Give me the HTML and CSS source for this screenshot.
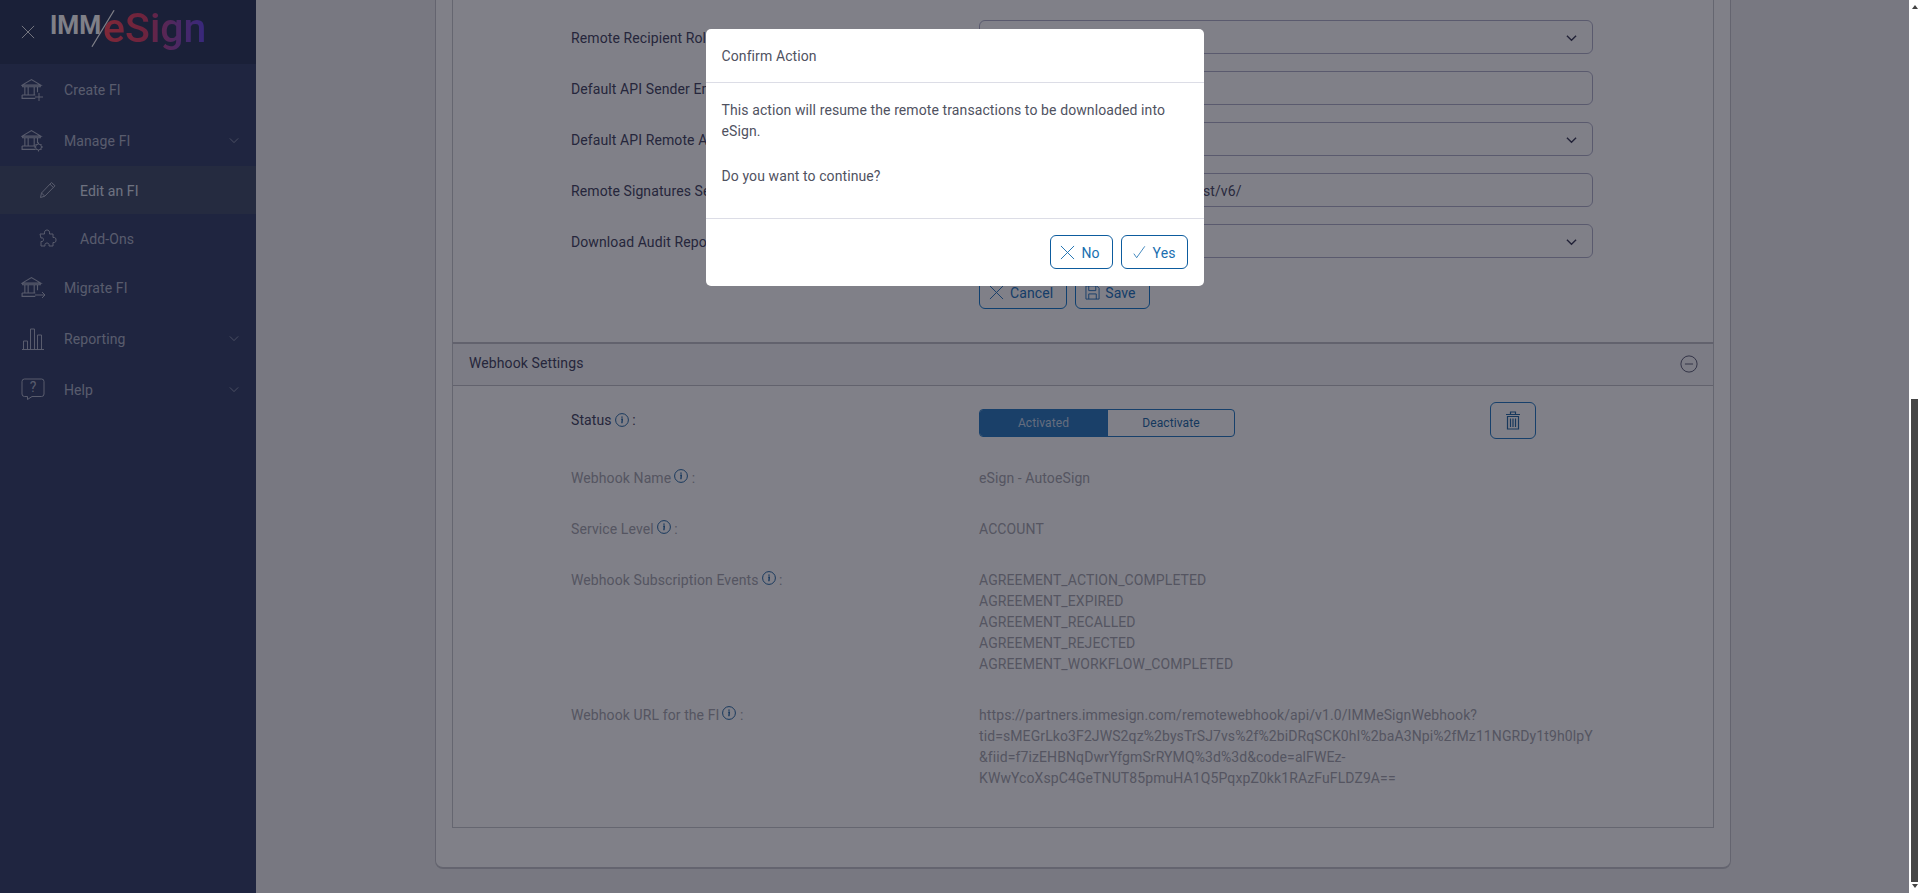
FILE: index.html
```html
<!DOCTYPE html>
<html lang="en">
<head>
<meta charset="utf-8">
<title>IMM eSign</title>
<link rel="stylesheet" href="styles.css">
</head>
<body>
<svg class="defs" width="0" height="0">
  <symbol id="bank" viewBox="0 0 20 20">
    <path d="M1 6.500 9.500 1.500 18 6.500Z M1.500 6.500V8H17.500V6.500 M3.500 8V15 M6.500 8V15 M12 8V15 M15 8V13 M1 15.500H13 M1 15.500V18.500H13"/>
  </symbol>
  <symbol id="chev" viewBox="0 0 12 8"><path d="M1 1.500 6 6.500 11 1.500"/></symbol>
  <symbol id="x" viewBox="0 0 16 16"><path d="M1 1 15 15M15 1 1 15"/></symbol>
  <symbol id="info" viewBox="0 0 14 14"><circle cx="7" cy="7" r="6.400"/><path class="i" d="M7 3.600V4.800M6.200 6.300H7.300L6.900 10.200"/></symbol>
</svg>
<div class="app">
  <div class="shell">
    <aside class="sidebar">
      <header class="brand">
        <svg class="icon close"><use href="#x"/></svg>
        <div class="logo">
          <span class="imm">IMM</span><span class="esign">eSign</span>
          <svg class="slash" viewBox="0 0 26 40"><path d="M1 39 24 1"/></svg>
        </div>
      </header>
      <nav class="nav">
        <a class="item"><svg class="icon nav-ic" viewBox="0 0 24 24"><use href="#bank" width="22" height="22"/><path d="M14 19H22M18 15V23"/></svg><span>Create FI</span></a>
        <a class="item"><svg class="icon nav-ic" viewBox="0 0 24 24"><use href="#bank" width="22" height="22"/><circle cx="17.500" cy="18" r="3"/><path d="M17.500 13.500V15M17.500 21V22.500M13 18H14.500M20.500 18H22M14.500 15 15.500 16M19.500 20 20.500 21M20.500 15 19.500 16M15.500 20 14.500 21"/></svg><span>Manage FI</span><svg class="icon chev"><use href="#chev"/></svg></a>
        <a class="sub current"><svg class="icon sub-ic" viewBox="0 0 18 18"><path d="M1.500 16.500 2.500 12 12.500 1.500 16 4.800 5.800 15.200ZM2.500 12 5.800 15.200M11 3.200 14.400 6.500"/></svg><span>Edit an FI</span></a>
        <a class="sub"><svg class="icon sub-ic" viewBox="0 0 18 18"><path d="M1 5H5.500C5 2 6.500 1 8 1S11 2 10.500 5H14V8.500C16.500 8 17 9.500 17 11S16.500 14 14 13.500V17H10C10.500 15 9.500 14 8 14S5.500 15 6 17H2V12.500C4 13 4.500 11.500 4.500 10.500S4 8.500 2 9Z"/></svg><span>Add-Ons</span></a>
        <a class="item"><svg class="icon nav-ic" viewBox="0 0 24 24"><use href="#bank" width="22" height="22"/><path d="M14 19H24M21 16 24 19 21 22"/></svg><span>Migrate FI</span></a>
        <a class="item"><svg class="icon nav-ic" viewBox="0 0 24 24"><path d="M1 22.500H23M2.500 22V14H6.500V22M9.500 22V2H13.500V22M16.500 22V8H20.500V22"/></svg><span>Reporting</span><svg class="icon chev"><use href="#chev"/></svg></a>
        <a class="item"><svg class="icon nav-ic" viewBox="0 0 24 24"><path d="M3.500 1H20.500Q23 1 23 3.500V16Q23 18.500 20.500 18.500H11L6.500 21.500V18.500H3.500Q1 18.500 1 16V3.500Q1 1 3.500 1Z"/><text class="q" x="12" y="14" text-anchor="middle">?</text></svg><span>Help</span><svg class="icon chev"><use href="#chev"/></svg></a>
      </nav>
    </aside>
    <main class="main">
      <section class="card">
        <div class="panel form-panel">
          <div class="form-row"><label class="label dark">Remote Recipient Role :</label><div class="control select"><svg class="icon select-chev"><use href="#chev"/></svg></div></div>
          <div class="form-row"><label class="label dark">Default API Sender Email :</label><div class="control"></div></div>
          <div class="form-row"><label class="label dark">Default API Remote Account :</label><div class="control select"><svg class="icon select-chev"><use href="#chev"/></svg></div></div>
          <div class="form-row"><label class="label dark">Remote Signatures Service URL :</label><div class="control">https://api.adobesign.com/api/rest/v6/</div></div>
          <div class="form-row"><label class="label dark">Download Audit Report :</label><div class="control select"><svg class="icon select-chev"><use href="#chev"/></svg></div></div>
          <div class="form-actions">
            <button class="btn under"><svg class="icon bx"><use href="#x"/></svg>Cancel</button>
            <button class="btn under"><svg class="icon bs" viewBox="0 0 16 16"><path d="M1 1H12.500L15 3.500V15H1ZM4 1V6H11.500V1M4 15V9.500H12V15"/></svg>Save</button>
          </div>
        </div>
        <div class="panel hook-panel">
          <div class="panel-head">
            <h2 class="panel-title">Webhook Settings</h2>
            <svg class="icon collapse" viewBox="0 0 20 20"><circle cx="10" cy="10" r="9"/><path d="M5.500 10H14.500"/></svg>
          </div>
          <div class="hook-body">
            <div class="hook-row status-row">
              <div class="label dark">Status<svg class="icon info"><use href="#info"/></svg> :</div>
              <div class="status-cell">
                <div class="toggle"><span class="on">Activated</span><span class="off">Deactivate</span></div>
                <button class="trash"><svg class="icon tr" viewBox="0 0 16 20"><path d="M1 4H15M5.500 4V1.500H10.500V4M2.500 6V18.500H13.500V6Z M5.500 8V16.500M8 8V16.500M10.500 8V16.500"/></svg></button>
              </div>
            </div>
            <div class="hook-row"><div class="label">Webhook Name<svg class="icon info"><use href="#info"/></svg> :</div><div class="value">eSign - AutoeSign</div></div>
            <div class="hook-row"><div class="label">Service Level<svg class="icon info"><use href="#info"/></svg> :</div><div class="value">ACCOUNT</div></div>
            <div class="hook-row"><div class="label">Webhook Subscription Events<svg class="icon info"><use href="#info"/></svg> :</div><div class="value">AGREEMENT_ACTION_COMPLETED<br>AGREEMENT_EXPIRED<br>AGREEMENT_RECALLED<br>AGREEMENT_REJECTED<br>AGREEMENT_WORKFLOW_COMPLETED</div></div>
            <div class="hook-row"><div class="label">Webhook URL for the FI<svg class="icon info"><use href="#info"/></svg> :</div><div class="value">https://partners.immesign.com/remotewebhook/api/v1.0/IMMeSignWebhook?<br>tid=sMEGrLko3F2JWS2qz%2bysTrSJ7vs%2f%2biDRqSCK0hI%2baA3Npi%2fMz11NGRDy1t9h0lpY<br>&amp;fiid=f7izEHBNqDwrYfgmSrRYMQ%3d%3d&amp;code=alFWEz-<br>KWwYcoXspC4GeTNUT85pmuHA1Q5PqxpZ0kk1RAzFuFLDZ9A==</div></div>
          </div>
        </div>
      </section>
    </main>
    <div class="backdrop">
      <div class="modal" role="dialog">
        <div class="modal-head">Confirm Action</div>
        <div class="modal-body">
          <p>This action will resume the remote transactions to be downloaded into eSign.</p>
          <p>Do you want to continue?</p>
        </div>
        <div class="modal-foot">
          <button class="btn"><svg class="icon bx"><use href="#x"/></svg>No</button>
          <button class="btn yes"><svg class="icon bc" viewBox="0 0 16 16"><path d="M1 10 4.500 15 14.500 1"/></svg>Yes</button>
        </div>
      </div>
    </div>
  </div>
  <div class="scrollbar">
    <span class="arrow up"></span>
    <span class="thumb"></span>
    <span class="arrow down"></span>
  </div>
</div>
</body>
</html>
```
FILE: styles.css
```css
* { box-sizing: border-box; }
html, body { margin: 0; height: 100%; overflow: hidden; }
body { font: 14px/21px Roboto, "Liberation Sans", sans-serif; letter-spacing: .1px; color: #a8a9b0; background: #fff; }
.defs { position: absolute; }
.icon { fill: none; stroke: currentColor; stroke-width: 1; display: block; flex: none; }

.app { display: flex; height: 893px; }
.shell { position: relative; flex: 1; display: flex; min-width: 0; background: #eeeff0; }

.sidebar { width: 256px; flex: none; background: #3c496f; color: #b0b6c8; }
.brand { height: 64px; display: flex; align-items: center; background: #323f5f; }
.close { width: 14px; height: 14px; margin-left: 21px; color: #fff; }
.logo { position: relative; margin-left: 15px; height: 64px; width: 165px; display: flex; align-items: flex-start; }
.imm { font: 700 25px/25px Roboto, sans-serif; letter-spacing: 0; color: #fff; margin-top: 13px; }
.esign { font: 500 41px/48px Roboto, sans-serif; letter-spacing: 0; margin: 4px 0 0 2px; background: linear-gradient(90deg, #ff4f5d 0%, #d8456a 40%, #9a4fb0 70%, #6c4fe9 100%); -webkit-background-clip: text; background-clip: text; color: transparent; }
.slash { position: absolute; left: 41px; top: 9px; width: 25px; height: 39px; stroke: #fff; stroke-width: 1.3; fill: none; }

.nav { display: flex; flex-direction: column; }
.item { height: 51px; display: flex; align-items: center; padding: 0 17px 0 21px; }
.item span { margin-left: 19px; flex: 1; padding-top: 2px; }
.nav-ic { width: 24px; height: 24px; overflow: visible; }
.q { font: 400 14px Roboto, sans-serif; fill: currentColor; stroke: none; }
.chev { width: 10px; height: 7px; stroke-width: .9; }
.sub { height: 48px; display: flex; align-items: center; padding-left: 39px; }
.sub span { margin-left: 23px; padding-top: 2px; }
.sub-ic { width: 18px; height: 18px; }
.current { background: #48556f; color: #dde2ee; }
.current .sub-ic { color: #b0b6c8; }

.main { flex: 1; min-width: 0; padding: 0 178px 24px 179px; }
.card { background: #fff; height: 869px; border: solid #c6c7cc; border-width: 0 1px 2px; border-radius: 0 0 8px 8px; padding: 0 16px; }
.panel { border: solid #c9cacf; border-width: 0 1px 1px; }
.form-panel { padding: 20px 0 33px 118px; border-bottom: 0; }
.form-row { display: grid; grid-template-columns: 408px 614px; height: 34px; margin-bottom: 17px; align-items: center; }
.label { display: flex; align-items: center; white-space: pre; color: #a8a9b0; }
.form-row .label { padding-top: 2px; }
.dark { color: #4a4b66; }
.control { position: relative; height: 34px; border: 1px solid #b2b3cb; border-radius: 6px; padding: 0 13px; line-height: 34px; color: #50516a; }
.select-chev { position: absolute; right: 15px; top: 13px; width: 11px; height: 8px; color: #42435e; stroke-width: 1.5; }
.form-actions { display: flex; gap: 8px; margin-left: 408px; }

.btn { height: 34px; display: inline-flex; align-items: center; padding: 2px 12px 0 9px; background: transparent; border: 1px solid #0d5c9e; border-radius: 6px; color: #1a6fb0; font: inherit; letter-spacing: inherit; }
.btn .icon { margin-top: -2px; }
.under { border-color: #1c7fcf; color: #2a78c0; padding-right: 13px; }
.bx { width: 15px; height: 15px; margin-right: 6px; }
.bs { width: 15px; height: 15px; margin-right: 5px; }
.yes { padding-left: 9px; padding-right: 11px; }
.bc { width: 13px; height: 14px; margin: -2px 7px 0 2px; }

.hook-panel { border-top: 2px solid #c2c3c9; height: 486px; }
.panel-head { height: 42px; display: flex; align-items: center; justify-content: space-between; padding: 0 15px 2px 16px; background: #f6f7f8; border-bottom: 1px solid #c2c3c9; }
.panel-title { margin: 0; font: inherit; letter-spacing: inherit; color: #4a4b66; }
.collapse { width: 18px; height: 18px; color: #55566e; }
.hook-body { padding: 16px 0 0 118px; }
.hook-row { display: grid; grid-template-columns: 408px 614px; margin-bottom: 30px; }
.hook-row .label { align-items: flex-start; }
.status-row { height: 37px; margin-bottom: 29px; }
.status-row .label { align-items: center; }
.info { width: 14px; height: 14px; margin: 1px 0 0 3px; color: #2f6fa8; }
.status-row .info { margin-top: -1px; }
.i { stroke-width: 1.4; }
.status-cell { display: flex; align-items: flex-start; }
.toggle { display: flex; width: 256px; height: 28px; margin-top: 7px; border: 1px solid #2c7fc5; border-radius: 4px; overflow: hidden; font-size: 12px; line-height: 26px; text-align: center; }
.on { width: 127px; background: #327fc1; color: #c8d8ea; }
.off { flex: 1; border-left: 1px solid #2c7fc5; color: #2a6ea8; }
.trash { width: 46px; height: 37px; margin-left: 255px; background: transparent; border: 1px solid #2c7fc5; border-radius: 6px; display: flex; align-items: center; justify-content: center; padding: 0; color: #2c6ea6; }
.tr { width: 16px; height: 21px; stroke-width: 1.2; }
.value { white-space: nowrap; }

.backdrop { position: absolute; inset: 0; background: rgba(2, 1, 17, .5); display: flex; justify-content: center; align-items: flex-start; padding-top: 29px; }
.modal { width: 498px; height: 257px; background: #fff; border-radius: 5px; color: #50525f; display: flex; flex-direction: column; }
.modal-head { height: 54px; padding: 0 16px; line-height: 55px; border-bottom: 1px solid #dcdde6; }
.modal-body { flex: 1; padding: 17px 16px 0; }
.modal-body p { margin: 0 0 24px; }
.modal-foot { height: 68px; padding: 16px 16px 0; border-top: 1px solid #dcdde6; display: flex; justify-content: flex-end; gap: 8px; }

.scrollbar { width: 11px; flex: none; background: #fff; display: flex; flex-direction: column; align-items: center; padding: 5px 0 3px; }
.arrow { width: 0; height: 0; border: 4px solid transparent; border-width: 0 3.5px 4px; border-bottom-color: #444; }
.down { border-width: 4px 3.5px 0; border-color: #444 transparent transparent; margin-top: 2px; }
.thumb { width: 7px; height: 483px; margin-top: 390px; background: #464646; }
```
